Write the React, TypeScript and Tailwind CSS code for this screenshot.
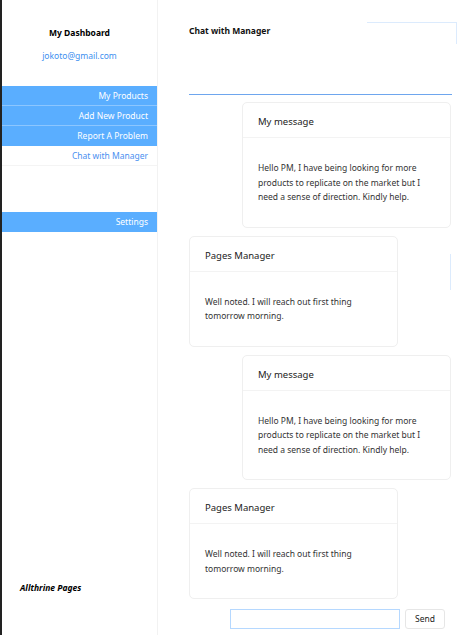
import React from "react";

const msgs = [
  { mine: true, title: "My message", text: "Hello PM, I have being looking for more products to replicate on the market but I need a sense of direction. Kindly help." },
  { mine: false, title: "Pages Manager", text: "Well noted. I will reach out first thing tomorrow morning." },
  { mine: true, title: "My message", text: "Hello PM, I have being looking for more products to replicate on the market but I need a sense of direction. Kindly help." },
  { mine: false, title: "Pages Manager", text: "Well noted. I will reach out first thing tomorrow morning." },
];

export default function App() {
  return (
    <div
      className="flex h-[635px] w-[476px] overflow-hidden bg-white border-l-2 border-[#222]"
      style={{ fontFamily: '"Noto Sans", "Open Sans", sans-serif' }}
    >
      <aside className="flex w-[156px] shrink-0 flex-col border-r border-[#f2f2f2] text-[8.5px]">
        <div className="pt-[26px] text-center font-bold text-[8.5px] leading-[14px] text-black">My Dashboard</div>
        <div className="mt-[9px] text-center text-[8.5px] leading-[14px] text-[#3d8ff0]">jokoto@gmail.com</div>
        <nav className="mt-[23px] flex flex-col">
          <div className="h-[20px] bg-[#5aaeff] pr-[9px] text-right leading-[20px] text-white border-b border-[#8cc6ff]">My Products</div>
          <div className="h-[20px] bg-[#5aaeff] pr-[9px] text-right leading-[20px] text-white border-b border-[#8cc6ff]">Add New Product</div>
          <div className="h-[20px] bg-[#5aaeff] pr-[9px] text-right leading-[20px] text-white">Report A Problem</div>
          <div className="h-[20px] bg-white pr-[9px] text-right leading-[20px] text-[#4a90f0] border-b border-[#f4f4f4]">Chat with Manager</div>
        </nav>
        <div className="mt-[46px] h-[20px] bg-[#5aaeff] pr-[9px] text-right leading-[20px] text-white">Settings</div>
        <div className="mt-auto mb-[40px] pl-[18px] text-[8.5px] font-bold italic text-black">Allthrine Pages</div>
      </aside>
      <main className="relative flex-1 pl-[31px] pr-[24px]">
        <div className="absolute left-[209px] top-[22px] h-[22px] w-[90px] border-t border-r border-[#dcebfd]" />
        <div className="absolute left-[292px] top-[254px] h-[36px] w-px bg-[#dcebfd]" />
        <div className="pt-[24px] text-[8.5px] font-bold leading-[14px] text-[#111]">Chat with Manager</div>
        <div className="mt-[56px] h-px bg-[#6ea6ee]" />
        <div className="mt-[7px] flex flex-col gap-[8px]">
          {msgs.map((m, i) => (
            <div key={i} className={`flex ${m.mine ? "justify-end pr-px" : "justify-start"}`}>
              <div className="w-[209px] rounded-[5px] border border-[#efefef] bg-white">
                <div className="border-b border-[#f3f3f3] px-[15px] pt-[12px] pb-[8px] text-[9.5px] leading-[14px] text-[#222]">{m.title}</div>
                <div className="px-[15px] pt-[23px] pb-[22px] text-[8.5px] leading-[14.5px] text-[#333]">{m.text}</div>
              </div>
            </div>
          ))}
        </div>
        <div className="mt-[10px] flex justify-end gap-[5px] pr-[7px]">
          <input className="h-[20px] w-[170px] border border-[#b5d8ff] outline-none" />
          <button className="h-[20px] w-[40px] rounded-[3px] border border-[#e6e6e6] bg-white text-[8.5px] text-[#222]">Send</button>
        </div>
      </main>
    </div>
  );
}
